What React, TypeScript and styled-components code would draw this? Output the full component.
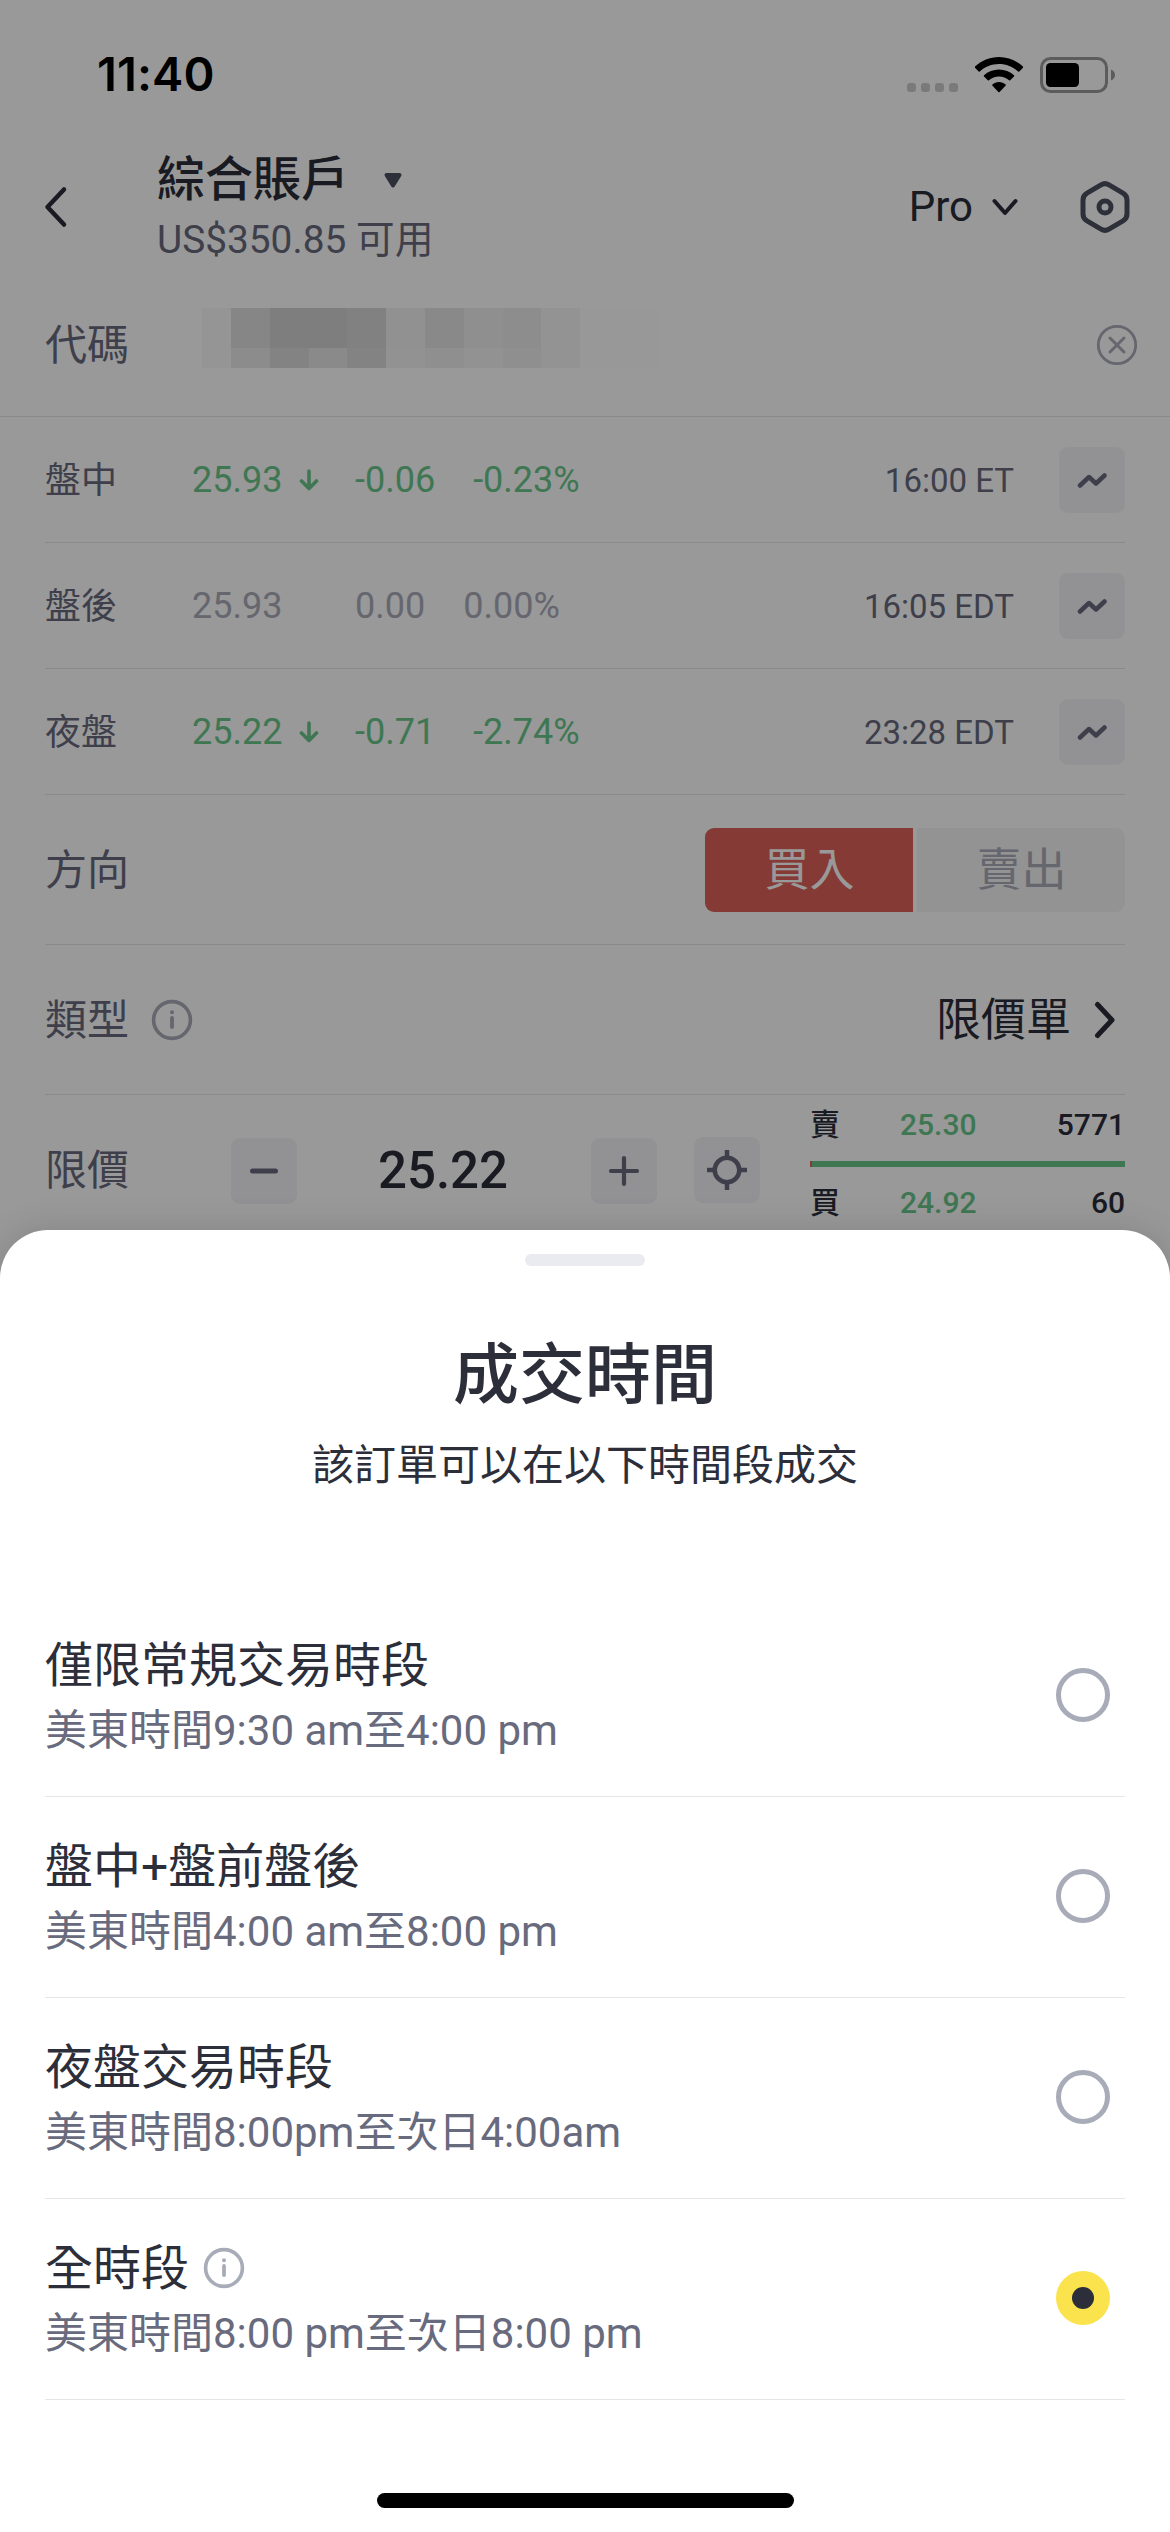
import React from "react";
import styled, { createGlobalStyle } from "styled-components";

const color = {
  ink: "#2c2e3a",
  secondary: "#686a7d",
  muted: "#a8abb8",
  green: "#69c68a",
  red: "#de625a",
  line: "#e6e6e8",
  chip: "#f4f4f9",
  yellow: "#fae34c",
};

const GlobalStyle = createGlobalStyle`
  * { box-sizing: border-box; }
  body {
    margin: 0;
    background: #fff;
    font-family: Roboto, "Noto Sans CJK TC", sans-serif;
    -webkit-font-smoothing: antialiased;
  }
  svg { display: block; flex: none; }
`;

const Phone = styled.main`
  position: relative;
  width: 1170px;
  height: 2532px;
  overflow: hidden;
  background: #fff;
  color: ${color.ink};
`;

/* ---------- status bar ---------- */

const StatusBar = styled.header`
  display: flex;
  align-items: center;
  justify-content: space-between;
  height: 141px;
  padding: 8px 54px 0 97px;
  color: #000;
`;

const Clock = styled.span`
  padding-bottom: 2px;
  font: 600 47px/54px Inter, sans-serif;
  letter-spacing: 0.1px;
`;

const StatusIcons = styled.div`
  display: flex;
  align-items: center;
`;

const SignalDots = styled.div`
  display: flex;
  gap: 5px;
  margin: 25px 17px 0 0;
`;

const SignalDot = styled.i`
  width: 9px;
  height: 9px;
  border-radius: 3px;
  background: #ccc;
`;

/* ---------- account header ---------- */

const AccountBar = styled.section`
  display: flex;
  align-items: center;
  height: 132px;
  padding: 0 40px 0 44px;
`;

const Account = styled.div`
  flex: 1;
  margin-left: 89px;
  padding-top: 5px;
`;

const AccountName = styled.h2`
  display: flex;
  align-items: center;
  gap: 32px;
  margin: 0;
  font-size: 48px;
  font-weight: 500;
  line-height: 60px;
`;

const Balance = styled.p`
  margin: 0;
  color: ${color.secondary};
  font-size: 38.8px;
  line-height: 60px;
`;

const ModePicker = styled.div`
  display: flex;
  align-items: center;
  gap: 19px;
  margin-right: 62px;
  font-size: 42px;
  line-height: 50px;
`;

/* ---------- form rows ---------- */

const SymbolRow = styled.section`
  display: flex;
  align-items: center;
  height: 144px;
  padding: 0 32px 0 45px;
  border-bottom: 1px solid ${color.line};
`;

const Label = styled.span<{ $small?: boolean; $width?: number }>`
  width: ${(p) => (p.$width ? `${p.$width}px` : "auto")};
  padding-top: 2px;
  color: ${color.secondary};
  font-size: ${(p) => (p.$small ? 36 : 42)}px;
  line-height: 60px;
`;

const Mosaic = styled.div`
  display: grid;
  grid-template-columns: 29px repeat(9, 38.8px) 80px;
  grid-template-rows: 40px 20px;
  margin-right: auto;
  padding-bottom: 14px;
`;

const Tile = styled.i<{ $shade: string }>`
  background: ${(p) => p.$shade};
`;

const FormRow = styled.div<{ $height: number }>`
  display: flex;
  align-items: center;
  height: ${(p) => p.$height}px;
  margin: 0 45px;
  border-bottom: 1px solid ${color.line};
`;

const Figure = styled.span<{ $tone: string; $width?: number }>`
  display: flex;
  align-items: center;
  gap: 17px;
  width: ${(p) => (p.$width ? `${p.$width}px` : "auto")};
  margin-right: ${(p) => (p.$width ? 0 : 38)}px;
  padding-top: 1px;
  color: ${(p) => p.$tone};
  font-size: 36px;
  line-height: 44px;
`;

const QuoteTime = styled.time`
  margin-left: auto;
  margin-right: 45px;
  padding-top: 2px;
  color: ${color.secondary};
  font-size: 33px;
  line-height: 40px;
`;

const IconButton = styled.button`
  display: grid;
  place-items: center;
  flex: none;
  width: 66px;
  height: 66px;
  padding: 0;
  border: 0;
  border-radius: 9px;
  background: ${color.chip};
`;

const SideSwitch = styled.div`
  display: flex;
  gap: 4px;
  margin-left: auto;
  border-radius: 9px;
  overflow: hidden;
`;

const Side = styled.button<{ $active?: boolean }>`
  width: 208px;
  height: 84px;
  padding: 2px 0 0 1px;
  border: 0;
  background: ${(p) => (p.$active ? color.red : "#f5f5f5")};
  color: ${(p) => (p.$active ? "#fff" : color.muted)};
  font: 400 45px/82px Roboto, "Noto Sans CJK TC", sans-serif;
`;

const TypeValue = styled.div`
  display: flex;
  align-items: center;
  gap: 23px;
  margin-left: auto;
  margin-right: 9px;
  font-size: 45px;
  line-height: 60px;
`;

const TypeName = styled.span`
  padding-top: 3px;
`;

const InfoGap = styled.span`
  margin-left: 22px;
`;

const Stepper = styled.div`
  display: flex;
  align-items: center;
  justify-content: space-between;
  width: 426px;
  margin-left: 102px;
  padding-top: 3px;
`;

const Price = styled.strong`
  padding-right: 2px;
  padding-bottom: 1px;
  font-size: 51px;
  font-weight: 500;
  line-height: 60px;
`;

const LocateSlot = styled.div`
  margin-left: 37px;
`;

const Book = styled.div`
  display: flex;
  flex-direction: column;
  width: 315px;
  margin-left: 50px;
  padding-bottom: 12px;
  font-size: 30px;
  font-weight: 500;
`;

const BookLine = styled.div`
  display: grid;
  grid-template-columns: 90px 1fr auto;
  line-height: 36px;
`;

const BookPrice = styled.span`
  color: ${color.green};
`;

const DepthBar = styled.div`
  height: 6px;
  margin: 18px 0;
  border-left: 2px solid ${color.red};
  background: ${color.green};
`;

/* ---------- bottom sheet ---------- */

const Scrim = styled.div`
  position: absolute;
  inset: 0;
  display: flex;
  flex-direction: column;
  justify-content: flex-end;
  background: rgba(0, 0, 0, 0.4);
`;

const Sheet = styled.section`
  display: flex;
  flex-direction: column;
  height: 1302px;
  border-radius: 48px 48px 0 0;
  background: #fff;
  box-shadow: 0 0 36px rgba(0, 0, 0, 0.14);
`;

const Grip = styled.i`
  align-self: center;
  width: 120px;
  height: 12px;
  margin-top: 24px;
  border-radius: 6px;
  background: #eaebf1;
`;

const SheetTitle = styled.h1`
  margin: 65px 0 0;
  font-size: 66px;
  font-weight: 500;
  line-height: 90px;
  text-align: center;
`;

const SheetHint = styled.p`
  margin: 15px 0 100px;
  font-size: 42px;
  line-height: 60px;
  text-align: center;
`;

const Option = styled.label`
  display: flex;
  align-items: center;
  justify-content: space-between;
  height: 201px;
  margin: 0 45px;
  padding-right: 15px;
  border-bottom: 1px solid ${color.line};
`;

const OptionText = styled.div`
  padding-top: 3px;
`;

const OptionName = styled.div`
  display: flex;
  align-items: center;
  gap: 14px;
  font-size: 48px;
  line-height: 65px;
`;

const OptionTime = styled.div`
  color: ${color.secondary};
  font-size: 42px;
  line-height: 65px;
`;

const Radio = styled.span<{ $on?: boolean }>`
  display: grid;
  place-items: center;
  width: 54px;
  height: 54px;
  margin-bottom: 2px;
  border: ${(p) => (p.$on ? "0" : "5px solid #a8abb8")};
  border-radius: 50%;
  background: ${(p) => (p.$on ? color.yellow : "#fff")};
`;

const RadioDot = styled.i`
  width: 22px;
  height: 22px;
  border-radius: 50%;
  background: ${color.ink};
`;

const HomeBar = styled.i`
  align-self: center;
  width: 417px;
  height: 15px;
  margin-top: 93px;
  border-radius: 8px;
  background: #000;
`;

/* ---------- icons ---------- */

const Wifi = () => (
  <svg width="48" height="36" viewBox="0 0 48 36">
    <path d="M24 0C33.2 0 41.6 3.6 48 9.6c.3.3.3.8 0 1.1l-3.7 3.8c-.3.3-.8.3-1.1 0C38 9.7 31.3 7 24 7S10 9.7 4.8 14.5c-.3.3-.8.3-1.1 0L0 10.7c-.3-.3-.3-.8 0-1.1C6.4 3.6 14.8 0 24 0Z" />
    <path d="M24 12.5c5.7 0 11 2.1 15 5.7.4.3.4.8 0 1.2l-3.8 3.8c-.3.3-.8.3-1.1 0C31.4 20.9 27.8 19.5 24 19.5s-7.4 1.4-10.1 3.7c-.3.3-.8.3-1.1 0L9 19.4c-.4-.4-.4-.9 0-1.2 4-3.6 9.3-5.7 15-5.7Z" />
    <path d="M24 25c2.5 0 4.8.9 6.6 2.4.4.3.4.8.1 1.2L24.6 35c-.3.4-.9.4-1.2 0l-6.1-6.4c-.3-.4-.3-.9.1-1.2C19.2 25.900 21.500 25 24 25Z" />
  </svg>
);

const BatterySlot = styled.span`
  margin-left: 17px;
`;

const Battery = () => (
  <BatterySlot>
    <svg width="76" height="36" viewBox="0 0 76 36">
      <rect x="1.5" y="1.5" width="65" height="33" rx="9" fill="none" stroke="#999" strokeWidth="3" />
      <rect x="6" y="6" width="33" height="24" rx="4.5" />
      <path d="M71 12.5c2.6 1 4 3 4 5.5s-1.4 4.5-4 5.5Z" fill="#999" />
    </svg>
  </BatterySlot>
);

const Stroke = ({ w, h, d, s, c = color.ink }: { w: number; h: number; d: string; s: number; c?: string }) => (
  <svg width={w} height={h} viewBox={`0 0 ${w} ${h}`} fill="none" stroke={c} strokeWidth={s} strokeLinecap="round" strokeLinejoin="round">
    <path d={d} />
  </svg>
);

const Hexagon = () => (
  <svg width="50" height="52" viewBox="0 0 50 52" fill="none" stroke="#4d5160">
    <path
      d="M21 3.800a8 8 0 0 1 8 0l14 8.400a8 8 0 0 1 4 7v13.600a8 8 0 0 1-4 7l-14 8.400a8 8 0 0 1-8 0l-14-8.400a8 8 0 0 1-4-7V19.200a8 8 0 0 1 4-7Z"
      strokeWidth="5"
      strokeLinejoin="round"
    />
    <circle cx="25" cy="26" r="6" strokeWidth="5" />
  </svg>
);

const ClearIcon = () => (
  <svg width="42" height="42" viewBox="0 0 42 42" fill="none" stroke={color.muted} strokeWidth="2.8" strokeLinecap="round">
    <circle cx="21" cy="21" r="18.7" />
    <path d="m14 14 14 14M28 14 14 28" strokeWidth="3" />
  </svg>
);

const InfoIcon = () => (
  <svg width="42" height="42" viewBox="0 0 42 42" fill="none" stroke={color.muted} strokeWidth="3.6" strokeLinecap="round">
    <circle cx="21" cy="21" r="18.4" />
    <path d="M21 19v9" strokeWidth="3.8" />
    <circle cx="21" cy="13.3" r="2" fill={color.muted} stroke="none" />
  </svg>
);

const Target = () => (
  <svg width="40" height="40" viewBox="0 0 40 40" fill="none" stroke={color.secondary} strokeWidth="4.5">
    <circle cx="20" cy="20" r="12.3" />
    <path d="M20 0v8M20 32v8M0 20h8M32 20h8" />
  </svg>
);

/* ---------- data ---------- */

const tiles = [
  ["#f8f8f8", "#e0e0e0", "#d2d2d2", "#d2d2d2", "#d8d8d8", "#f2f2f2", "#e5e5e5", "#eeeeee", "#ebebeb", "#f5f5f5", "#fdfdfd"],
  ["#f8f8f8", "#e9e9e9", "#dadada", "#e6e6e6", "#dbdbdb", "#f3f3f3", "#efefef", "#f3f3f3", "#efefef", "#f5f5f5", "#fdfdfd"],
];

const quotes = [
  { name: "盤中", price: "25.93", change: "-0.06", pct: "-0.23%", time: "16:00 ET", down: true },
  { name: "盤後", price: "25.93", change: "0.00", pct: "0.00%", time: "16:05 EDT", down: false },
  { name: "夜盤", price: "25.22", change: "-0.71", pct: "-2.74%", time: "23:28 EDT", down: true },
];

const sessions = [
  { name: "僅限常規交易時段", time: "美東時間9:30 am至4:00 pm" },
  { name: "盤中+盤前盤後", time: "美東時間4:00 am至8:00 pm" },
  { name: "夜盤交易時段", time: "美東時間8:00pm至次日4:00am" },
  { name: "全時段", time: "美東時間8:00 pm至次日8:00 pm", info: true, on: true },
];

export default function App() {
  return (
    <Phone>
      <GlobalStyle />
      <StatusBar>
        <Clock>11:40</Clock>
        <StatusIcons>
          <SignalDots>
            {[0, 1, 2, 3].map((n) => (
              <SignalDot key={n} />
            ))}
          </SignalDots>
          <Wifi />
          <Battery />
        </StatusIcons>
      </StatusBar>

      <AccountBar>
        <Stroke w={24} h={42} s={4.5} d="M20 3.5 3.5 21 20 38.5" />
        <Account>
          <AccountName>
            綜合賬戶
            <svg width="24" height="18" viewBox="0 0 24 18">
              <path d="M5.5 4h13L12 14.500Z" fill="#4d5160" stroke="#4d5160" strokeWidth="4" strokeLinejoin="round" />
            </svg>
          </AccountName>
          <Balance>US$350.85 可用</Balance>
        </Account>
        <ModePicker>
          Pro
          <Stroke w={26} h={18} s={4} d="M2.5 3 13 15 23.5 3" />
        </ModePicker>
        <Hexagon />
      </AccountBar>

      <SymbolRow>
        <Label $width={157}>代碼</Label>
        <Mosaic>
          {tiles.flatMap((row, r) => row.map((shade, c) => <Tile key={`${r}-${c}`} $shade={shade} />))}
        </Mosaic>
        <ClearIcon />
      </SymbolRow>

      {quotes.map((q) => (
        <FormRow key={q.name} $height={126}>
          <Label $small $width={147}>
            {q.name}
          </Label>
          <Figure $tone={q.down ? color.green : color.muted} $width={163}>
            {q.price}
            {q.down && <Stroke w={20} h={22} s={3.6} c={color.green} d="M10 2v17M2.5 12 10 19.5 17.5 12" />}
          </Figure>
          <Figure $tone={q.down ? color.green : color.muted}>{q.change}</Figure>
          <Figure $tone={q.down ? color.green : color.muted}>{q.pct}</Figure>
          <QuoteTime>{q.time}</QuoteTime>
          <IconButton>
            <Stroke w={30} h={16} s={4.5} c={color.secondary} d="M3 13.500 12 5 19 11.500 27.500 3.500" />
          </IconButton>
        </FormRow>
      ))}

      <FormRow $height={150}>
        <Label>方向</Label>
        <SideSwitch>
          <Side $active>買入</Side>
          <Side>賣出</Side>
        </SideSwitch>
      </FormRow>

      <FormRow $height={150}>
        <Label>類型</Label>
        <InfoGap>
          <InfoIcon />
        </InfoGap>
        <TypeValue>
          <TypeName>限價單</TypeName>
          <Stroke w={22} h={38} s={5} d="M3.5 3.5 18 19 3.5 34.5" />
        </TypeValue>
      </FormRow>

      <FormRow $height={150}>
        <Label>限價</Label>
        <Stepper>
          <IconButton>
            <Stroke w={30} h={8} s={5} c={color.secondary} d="M3.5 4h23" />
          </IconButton>
          <Price>25.22</Price>
          <IconButton>
            <Stroke w={32} h={32} s={4.2} c={color.secondary} d="M3 16h26M16 3v26" />
          </IconButton>
        </Stepper>
        <LocateSlot>
          <IconButton>
            <Target />
          </IconButton>
        </LocateSlot>
        <Book>
          <BookLine>
            <span>賣</span>
            <BookPrice>25.30</BookPrice>
            <span>5771</span>
          </BookLine>
          <DepthBar />
          <BookLine>
            <span>買</span>
            <BookPrice>24.92</BookPrice>
            <span>60</span>
          </BookLine>
        </Book>
      </FormRow>

      <Scrim>
        <Sheet>
          <Grip />
          <SheetTitle>成交時間</SheetTitle>
          <SheetHint>該訂單可以在以下時間段成交</SheetHint>
          {sessions.map((s) => (
            <Option key={s.name}>
              <OptionText>
                <OptionName>
                  {s.name}
                  {s.info && <InfoIcon />}
                </OptionName>
                <OptionTime>{s.time}</OptionTime>
              </OptionText>
              <Radio $on={s.on}>{s.on && <RadioDot />}</Radio>
            </Option>
          ))}
          <HomeBar />
        </Sheet>
      </Scrim>
    </Phone>
  );
}
